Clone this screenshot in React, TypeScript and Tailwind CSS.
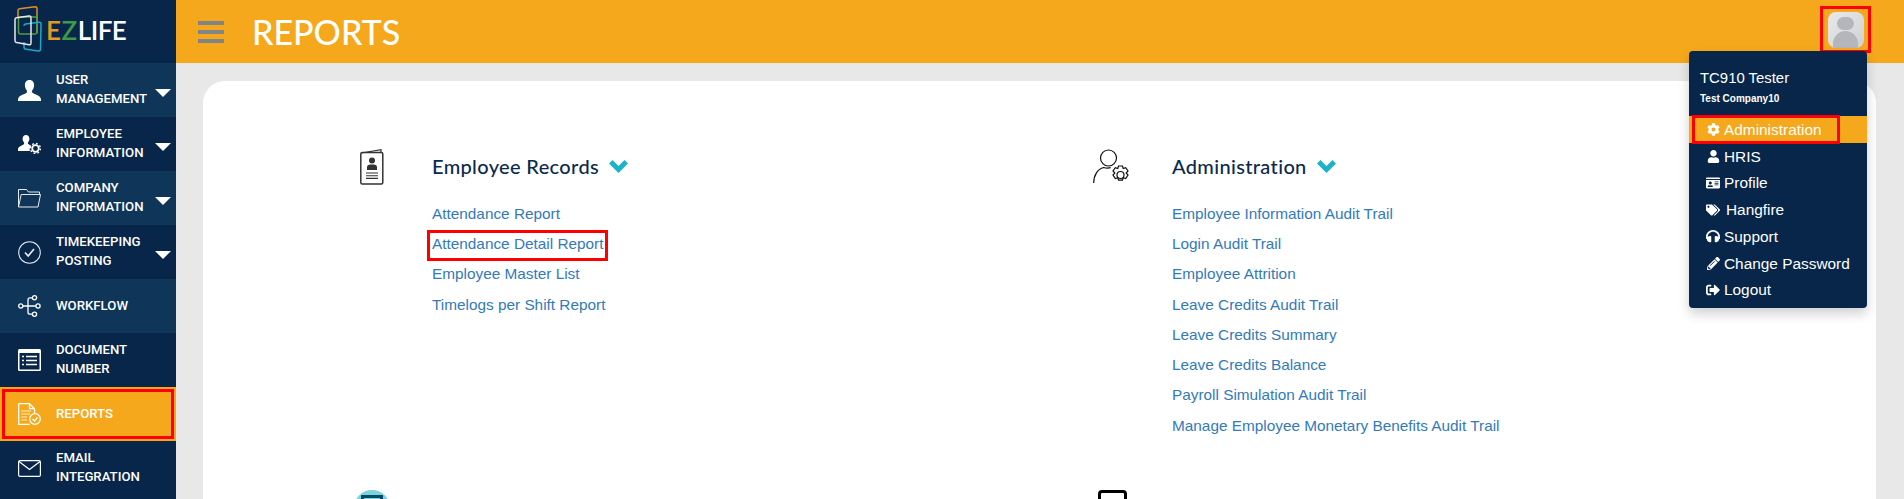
import React from 'react';
import { FaCog, FaUser, FaIdCard, FaTags, FaHeadphones, FaPencilAlt, FaSignOutAlt } from 'react-icons/fa';

const SANS = 'font-["Liberation_Sans",Arial,sans-serif]';

function UserIcon() {
  return (
    <svg width="23" height="21" viewBox="0 0 23 21" fill="#fff">
      <path d="M11.5 0c3 0 4.6 2.2 4.6 5.2 0 2.2-.9 4-2 5.2v2c1.2 1.6 8.9 2.5 8.9 7.100v1.500H0v-1.500c0-4.600 7.700-5.500 8.900-7.100v-2c-1.100-1.200-2-3-2-5.200C6.900 2.200 8.500 0 11.500 0z" />
    </svg>
  );
}

function EmployeeIcon() {
  return (
    <svg width="23" height="19" viewBox="0 0 23 19" fill="#fff">
      <path d="M8 0c2 0 3.400 1.600 3.400 3.800 0 1.500-.6 2.800-1.500 3.700v1.300c.7.700 2.400 1.200 3.400 2-1.300 1-1.800 2.800-1.500 5.200H0v-1.600c0-3.300 5-3.600 6.100-5.600V7.500C5.200 6.600 4.600 5.300 4.600 3.800 4.600 1.600 6 0 8 0z" />
      <circle cx="17.5" cy="13.5" r="3.3" fill="none" stroke="#fff" strokeWidth="1.8" />
      <circle cx="17.5" cy="13.5" r="5" fill="none" stroke="#fff" strokeWidth="1.4" strokeDasharray="1.8 2.1" />
    </svg>
  );
}

function FolderIcon() {
  return (
    <svg width="23" height="20" viewBox="0 0 23 20" fill="none" stroke="#e6ebf0" strokeWidth="1">
      <path d="M.5 19V1.500h8l2 2.500h11v2.500" />
      <path d="M.5 19h19.500l2.500-12.500H3.200z" />
    </svg>
  );
}

function CheckCircleIcon() {
  return (
    <svg width="23" height="23" viewBox="0 0 23 23" fill="none" stroke="#e6ebf0">
      <circle cx="11.5" cy="11.5" r="10.8" strokeWidth="1.1" />
      <path d="M7 11.500l3.200 3.500 5.800-7" strokeWidth="1.7" />
    </svg>
  );
}

function WorkflowIcon() {
  return (
    <svg width="23" height="22" viewBox="0 0 23 22" fill="none" stroke="#fff" strokeWidth="1.3">
      <circle cx="2.8" cy="11" r="2.1" />
      <circle cx="16.5" cy="2.8" r="2.1" />
      <circle cx="20" cy="11" r="2.1" />
      <circle cx="16.5" cy="19.2" r="2.1" />
      <path d="M5 11h12.800M14.300 2.800H12a2 2 0 0 0-2 2v12.400a2 2 0 0 0 2 2h2.300" />
    </svg>
  );
}

function DocumentIcon() {
  return (
    <svg width="23" height="22" viewBox="0 0 23 22">
      <rect width="23" height="22" rx="1.5" fill="#fff" />
      <rect x="1.5" y="4" width="20" height="16.5" fill="#08264a" />
      <path d="M8 7.500h11M8 11.500h11M8 15.500h11" stroke="#fff" strokeWidth="1.7" />
      <path d="M4 7.500h2M4 11.500h2M4 15.500h2" stroke="#fff" strokeWidth="1.7" />
    </svg>
  );
}

function ReportIcon() {
  return (
    <svg width="23" height="22" viewBox="0 0 23 22" fill="none">
      <path d="M.7.700h10.800l5 5v6M.7.700v20.600h11" stroke="#fff" strokeWidth="1.3" />
      <path d="M11.500.700v5h5" stroke="#fff" strokeWidth="1.3" />
      <path d="M3 8h10M3 11h9M3 14h6M3 17h6" stroke="#fbd68a" strokeWidth="1.3" />
      <circle cx="17" cy="16" r="5.3" fill="#f6a81c" stroke="#fff" strokeWidth="1.3" />
      <path d="M14.500 16l2 2 3-3.500" stroke="#fff" strokeWidth="1.5" />
    </svg>
  );
}

function MailIcon() {
  return (
    <svg width="23" height="17" viewBox="0 0 23 17" fill="none" stroke="#fff" strokeWidth="1.2">
      <rect x=".6" y=".6" width="21.8" height="15.8" rx="1.5" />
      <path d="M1 1.500l10.500 8 10.500-8" />
    </svg>
  );
}

const sideItems = [
  { label: ['USER', 'MANAGEMENT'], icon: <UserIcon />, caret: true, bg: 'bg-[#0f3558]' },
  { label: ['EMPLOYEE', 'INFORMATION'], icon: <EmployeeIcon />, caret: true, bg: 'bg-[#08264a]' },
  { label: ['COMPANY', 'INFORMATION'], icon: <FolderIcon />, caret: true, bg: 'bg-[#0f3558]' },
  { label: ['TIMEKEEPING', 'POSTING'], icon: <CheckCircleIcon />, caret: true, bg: 'bg-[#08264a]' },
  { label: ['WORKFLOW'], icon: <WorkflowIcon />, caret: false, bg: 'bg-[#0f3558]' },
  { label: ['DOCUMENT', 'NUMBER'], icon: <DocumentIcon />, caret: false, bg: 'bg-[#08264a]' },
  { label: ['REPORTS'], icon: <ReportIcon />, caret: false, bg: 'bg-[#f6a81c]', active: true },
  { label: ['EMAIL', 'INTEGRATION'], icon: <MailIcon />, caret: false, bg: 'bg-[#08264a]' },
];

function Sidebar() {
  return (
    <div className="w-[176px] h-full shrink-0 bg-[#08264a] flex flex-col">
      <div className="h-[63px] shrink-0 flex items-start pl-[14px] pt-[6px]">
        <svg width="28" height="46" viewBox="0 0 28 46" fill="none" strokeWidth="1.5" className="shrink-0">
          <path d="M4 11V4.500Q4 3 5.500 2.800L21 .8Q23 .8 23 2.500V27" stroke="#d8922a" />
          <rect x="4.500" y="11" width="18.500" height="17" rx="2" stroke="#4f9a45" />
          <path d="M10 36v5q0 2 2 2.200l12.500 1.800q2 0 2-2L27 18q0-2-2-1.800L11.500 18q-1.500.2-1.500 2" stroke="#1fa7c4" />
          <path d="M1 13.500q0-1.500 1.500-1.700L15 10q2-.2 2 1.800V37q0 2-2 1.800L2.500 36.500Q1 36.300 1 34.500z" stroke="#e8e8e8" />
        </svg>
        <div className="font-['Lato',sans-serif] font-semibold text-[26px] leading-none mt-[11px] ml-[4px] tracking-[-0.5px] flex">
          <span className="text-[#e29a24]">E</span>
          <span className="text-[#3d9a47] ml-[1px]">Z</span>
          <span className="text-white ml-[1px]">LIFE</span>
        </div>
      </div>
      {sideItems.map((it) => (
        <div key={it.label[0]} className={`relative h-[54px] shrink-0 flex items-center pl-[18px] ${it.bg}`}>
          <div className="w-[23px] flex justify-center shrink-0">{it.icon}</div>
          <div className="ml-[15px] pb-[2px] font-['Roboto',sans-serif] font-medium text-[13.2px] leading-[19px] text-white">
            {it.label.map((l) => (
              <div key={l}>{l}</div>
            ))}
          </div>
          {it.caret && (
            <div className="absolute right-[5px] top-[26px] w-0 h-0 border-l-[8px] border-r-[8px] border-t-[8px] border-l-transparent border-r-transparent border-t-white" />
          )}
          {it.active && <div className="absolute left-[2px] right-[2px] top-[2px] bottom-[2px] border-[3px] border-[#ff0000]" />}
        </div>
      ))}
    </div>
  );
}

function CardIcon() {
  return (
    <svg width="24" height="36" viewBox="0 0 24 36" fill="none">
      <path d="M1.500 4L21 .7V3" stroke="#333" strokeWidth="1.2" />
      <rect x=".8" y="3.500" width="22" height="31.5" rx="1.500" stroke="#333" strokeWidth="1.5" />
      <circle cx="12" cy="11.500" r="3" fill="#333" />
      <path d="M7 21v-3c0-2 2-2.500 5-2.500s5 .5 5 2.500v3z" fill="#333" />
      <path d="M6 24h12M6 26.700h12M6 29.400h12" stroke="#333" strokeWidth="1.1" />
    </svg>
  );
}

function AdminIcon() {
  return (
    <svg width="38" height="37" viewBox="0 0 38 37" fill="none" stroke="#111" strokeWidth="1.2">
      <circle cx="15.500" cy="9" r="8" />
      <path d="M.7 34c0-8 4-14 10-15.500 2 .7 5 .7 7 .2" />
      <circle cx="27.500" cy="26" r="3.500" />
      <path d="M25.500 17h4l.7 2.500 2.500-.8 2.300 3.300-1.800 2 1.800 2-2.300 3.500-2.500-.8-.7 2.500h-4l-.7-2.500-2.500.8-2.300-3.500 1.800-2-1.800-2 2.300-3.300 2.500.8z" />
    </svg>
  );
}

function Section({ title, icon, links, boxed }: { title: string; icon: React.ReactNode; links: string[]; boxed?: string }) {
  return (
    <div className="flex items-start">
      <div className="w-[120px] shrink-0 flex justify-center -mt-[1px]">{icon}</div>
      <div>
        <div className="h-[36px] -mt-[2px] flex items-center">
          <span className="font-['Lato',sans-serif] font-medium text-[20px] tracking-[0.35px] text-[#0a2a4d]">{title}</span>
          <svg width="19" height="13" viewBox="0 0 19 13" className="ml-[10px]" fill="#1cb3c8">
            <path d="M0 3.500L3.500 0l6 6 6-6L19 3.500 9.500 13z" />
          </svg>
        </div>
        <div className="mt-[14px] flex flex-col items-start">
          {links.map((l) => (
            <div key={l} className={`${SANS} relative h-[30.3px] flex items-center text-[15.35px] text-[#337ab7] whitespace-nowrap`}>
              {l}
              {l === boxed && <div className="absolute -left-[5px] -right-[5px] top-[2px] -bottom-[2px] border-[3px] border-[#ff0000]" />}
            </div>
          ))}
        </div>
      </div>
    </div>
  );
}

function UserMenu() {
  const rows: { label: string; icon: React.ReactNode; active?: boolean; extra?: boolean }[] = [
    { label: 'Administration', active: true, icon: <FaCog size={13} /> },
    { label: 'HRIS', icon: <FaUser size={13} /> },
    { label: 'Profile', icon: <FaIdCard size={14} /> },
    { label: 'Hangfire', extra: true, icon: <FaTags size={14} /> },
    { label: 'Support', icon: <FaHeadphones size={14} /> },
    { label: 'Change Password', icon: <FaPencilAlt size={13} /> },
    { label: 'Logout', icon: <FaSignOutAlt size={14} /> },
  ];
  return (
    <div className={`${SANS} absolute right-[37px] top-[51px] w-[178px] h-[257px] bg-[#08264a] rounded-[4px] shadow-[0_6px_12px_rgba(0,0,0,0.18)] text-white`}>
      <div className="pl-[11px] pt-[17px] h-[65px]">
        <div className="text-[14.9px] leading-[20px]">TC910 Tester</div>
        <div className="text-[10px] leading-[16px] mt-[3px] font-bold">Test Company10</div>
      </div>
      {rows.map((r) => (
        <div key={r.label} className={`relative flex items-center pl-[17px] text-[15.4px] ${r.active ? 'bg-[#f6a81c] h-[27px]' : 'h-[26.7px]'}`}>
          <div className="w-[14px] flex justify-center shrink-0">{r.icon}</div>
          <span className={r.extra ? 'ml-[6px]' : 'ml-[4px]'}>{r.label}</span>
          {r.active && <div className="absolute left-[3px] top-[-1px] bottom-[-1px] w-[148px] border-[3px] border-[#ff0000]" />}
        </div>
      ))}
    </div>
  );
}

export default function App() {
  return (
    <div className="relative w-[1904px] h-[499px] overflow-hidden flex bg-[#e8e8e8]">
      <Sidebar />
      <div className="flex-1 flex flex-col min-w-0">
        <div className="relative h-[63px] shrink-0 bg-[#f6a81c] flex items-center">
          <div className="ml-[22px] w-[26px] flex flex-col gap-[5px]">
            <div className="h-[4px] bg-[#7f8487]" />
            <div className="h-[4px] bg-[#7f8487]" />
            <div className="h-[4px] bg-[#7f8487]" />
          </div>
          <div className="ml-[28px] font-['Lato',sans-serif] font-medium text-[34px] text-white">REPORTS</div>
          <div className="absolute right-[33px] top-[6px] w-[51px] h-[47px] border-[3px] border-[#ff0000] flex items-center justify-center">
            <div className="w-[36px] h-[36px] rounded-[8px] bg-gradient-to-br from-[#e8e9ea] to-[#cfd1d4] overflow-hidden flex flex-col items-center">
              <div className="mt-[5px] w-[17px] h-[17px] rounded-full bg-[#b4b6bb]" />
              <div className="mt-[1px] w-[25px] h-[20px] rounded-t-full bg-[#b4b6bb]" />
            </div>
          </div>
        </div>
        <div className="flex-1 pl-[27px] pr-[28px] pt-[18px] min-h-0">
          <div className="bg-white rounded-t-[22px] h-[500px] pl-[109px] pt-[69px]">
            <div className="grid grid-cols-[740px_1fr]">
              <Section
                title="Employee Records"
                icon={<CardIcon />}
                boxed="Attendance Detail Report"
                links={['Attendance Report', 'Attendance Detail Report', 'Employee Master List', 'Timelogs per Shift Report']}
              />
              <Section
                title="Administration"
                icon={<AdminIcon />}
                links={[
                  'Employee Information Audit Trail',
                  'Login Audit Trail',
                  'Employee Attrition',
                  'Leave Credits Audit Trail',
                  'Leave Credits Summary',
                  'Leave Credits Balance',
                  'Payroll Simulation Audit Trail',
                  'Manage Employee Monetary Benefits Audit Trail',
                ]}
              />
            </div>
            <div className="grid grid-cols-[740px_1fr] mt-[50px]">
              <div className="flex justify-center w-[120px]">
                <div className="w-[36px] h-[36px] rounded-full bg-[#7fd3dc] overflow-hidden flex justify-center">
                  <div className="mt-[5px] w-[22px] h-[12px] border-t-[3px] border-x-[3px] border-[#0b4a66]" />
                </div>
              </div>
              <div className="flex justify-center w-[120px]">
                <div className="w-[29px] h-[20px] border-[3px] border-black rounded-[4px]" />
              </div>
            </div>
          </div>
        </div>
      </div>
      <UserMenu />
    </div>
  );
}
